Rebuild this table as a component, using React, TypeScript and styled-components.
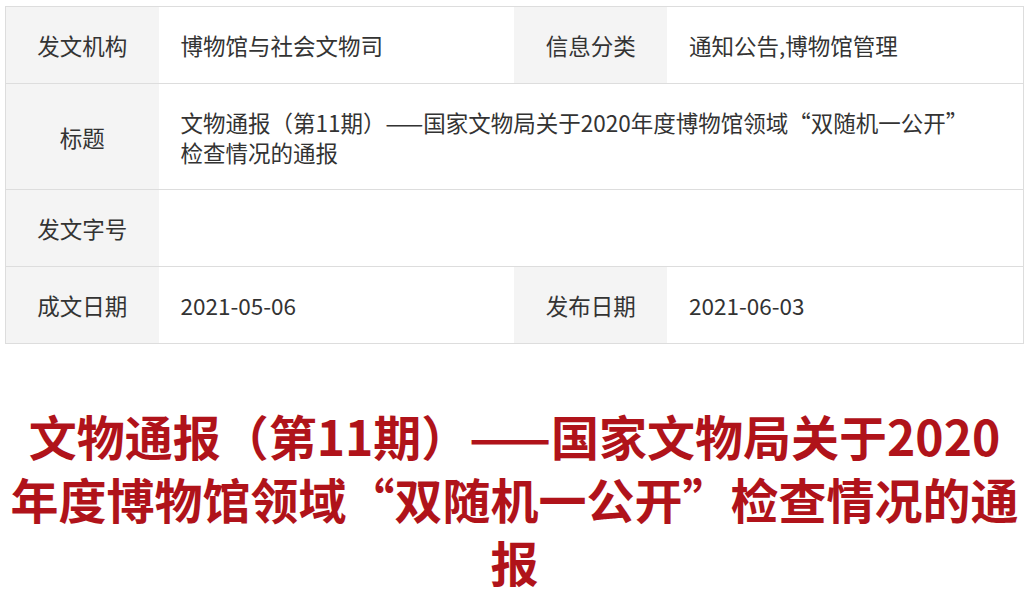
import React from 'react';
import styled, { createGlobalStyle } from 'styled-components';

const GlobalStyle = createGlobalStyle`
  html, body { margin: 0; padding: 0; background: #fff; }
  body { font-family: "Noto Sans CJK SC", "Noto Sans", sans-serif; }
`;

const Page = styled.div`
  padding: 6px 5px 0;
`;

const InfoTable = styled.div`
  border: 1px solid #ddd;
`;

const Row = styled.div`
  display: grid;
  grid-template-columns: 15% 35% 15% 35%;
  & + & {
    border-top: 1px solid #ddd;
  }
`;

const Label = styled.div`
  background: #f4f4f4;
  color: #333;
  font-size: 22.5px;
  line-height: 30px;
  padding: 23px 8px;
  display: flex;
  align-items: center;
  justify-content: center;
`;

const Value = styled.div<{ $span?: number; $multiline?: boolean }>`
  grid-column: span ${(p) => p.$span ?? 1};
  padding: ${(p) => (p.$multiline ? '22.5px 40px 22.5px 22px' : '23px 40px 23px 22px')};
  color: #333;
  font-size: 22.5px;
  line-height: 30px;
  display: flex;
  align-items: center;
`;

const ValueText = styled.span`
  display: block;
`;

const Headline = styled.h1`
  margin: 60px 0 0;
  color: #b0131a;
  font-size: 48px;
  line-height: 63px;
  font-weight: 700;
  text-align: center;
`;

const titleHead = '文物通报（第11期）——国家文物局关于2020年度博物馆领域“双随机一公开”';
const titleTail = '检查情况的通报';

export default function App() {
  return (
    <>
      <GlobalStyle />
      <Page>
        <InfoTable>
          <Row>
            <Label>发文机构</Label>
            <Value>博物馆与社会文物司</Value>
            <Label>信息分类</Label>
            <Value>通知公告,博物馆管理</Value>
          </Row>
          <Row>
            <Label>标题</Label>
            <Value $span={3} $multiline>
              <ValueText>
                {titleHead}
                <wbr />
                {titleTail}
              </ValueText>
            </Value>
          </Row>
          <Row>
            <Label>发文字号</Label>
            <Value $span={3}></Value>
          </Row>
          <Row>
            <Label>成文日期</Label>
            <Value>2021-05-06</Value>
            <Label>发布日期</Label>
            <Value>2021-06-03</Value>
          </Row>
        </InfoTable>
        <Headline>{titleHead + titleTail}</Headline>
      </Page>
    </>
  );
}
